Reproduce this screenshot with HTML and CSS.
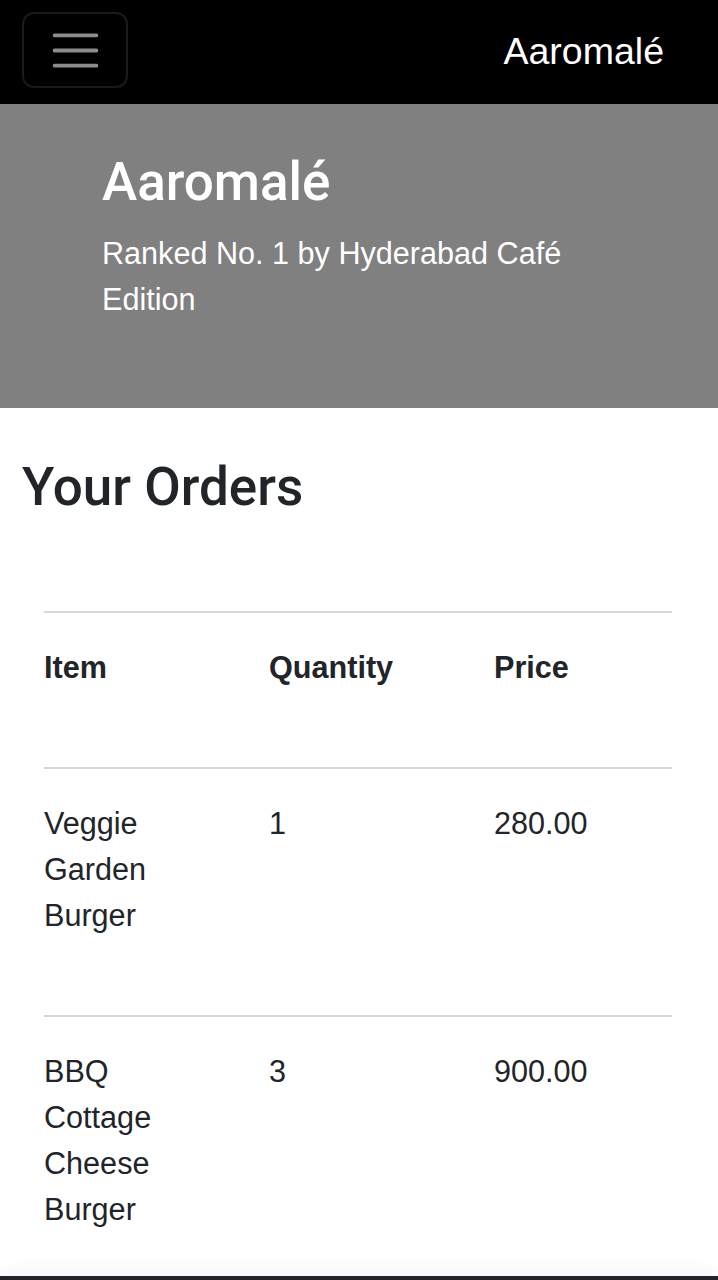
FILE: index.html
```html
<!DOCTYPE html>
<html lang="en">

<head>
    <meta charset="UTF-8">
    <meta name="viewport" content="width=device-width, initial-scale=1.0">
    <title>Aaromalé - Your Orders</title>
    <link rel="stylesheet" href="styles.css">
</head>

<body>
    <nav class="navbar">
        <button class="navbar-toggler" type="button" aria-label="Toggle navigation">
            <svg class="toggler-icon" viewBox="0 0 30 30" xmlns="http://www.w3.org/2000/svg">
                <path d="M4 7h22M4 15h22M4 23h22" stroke="rgba(255,255,255,0.55)" stroke-width="2" stroke-linecap="round" fill="none"/>
            </svg>
        </button>
        <a class="navbar-brand" href="#">Aaromalé</a>
    </nav>

    <section class="hero">
        <h1>Aaromalé</h1>
        <p>Ranked No. 1 by Hyderabad Café Edition</p>
    </section>

    <div class="container">
        <h1 class="page-title">Your Orders</h1>

        <table class="orders-table">
            <colgroup>
                <col class="col-item">
                <col class="col-qty">
                <col class="col-price">
            </colgroup>
            <thead>
                <tr>
                    <th>Item</th>
                    <th>Quantity</th>
                    <th>Price</th>
                </tr>
            </thead>
            <tbody>
                <tr>
                    <td>Veggie Garden Burger</td>
                    <td>1</td>
                    <td>280.00</td>
                </tr>
                <tr>
                    <td>BBQ Cottage Cheese Burger</td>
                    <td>3</td>
                    <td>900.00</td>
                </tr>
            </tbody>
        </table>
    </div>

    <footer class="bottom-bar"></footer>
</body>
</html>
```

FILE: styles.css
```css
:root {
    --text-color: #212529;
    --hero-bg: #808080;
    --border-color: #d6d6d6;
}

* {
    margin: 0;
    padding: 0;
    box-sizing: border-box;
}

body {
    font-family: 'Liberation Sans', Arial, sans-serif;
    font-size: 30.6px;
    line-height: 46px;
    color: var(--text-color);
    background-color: #ffffff;
}

.navbar {
    display: flex;
    justify-content: space-between;
    align-items: flex-start;
    height: 104px;
    padding: 12px 54px 0 22px;
    background-color: #000000;
}

.navbar-toggler {
    display: flex;
    align-items: center;
    justify-content: center;
    width: 106px;
    height: 76px;
    background: none;
    border: 2px solid #1a1a1a;
    border-radius: 12px;
}

.toggler-icon {
    width: 57px;
    height: 57px;
}

.navbar-brand {
    margin-top: 16px;
    font-size: 37.5px;
    line-height: 46px;
    color: #ffffff;
    text-decoration: none;
}

.hero {
    background-color: var(--hero-bg);
    color: #ffffff;
    padding: 47px 102px 86px;
}

.hero h1,
.page-title {
    font-family: Roboto, 'Liberation Sans', sans-serif;
    font-size: 53px;
    font-weight: 500;
    line-height: 1.2;
}

.hero h1 {
    margin-bottom: 15px;
}

.container {
    padding: 0 22px;
}

.page-title {
    margin-top: 48px;
    margin-bottom: 92px;
}

.orders-table {
    width: 628px;
    margin-left: 22px;
    border-collapse: collapse;
    table-layout: fixed;
    border-top: 2px solid var(--border-color);
}

.col-item,
.col-qty {
    width: 225px;
}

.orders-table th,
.orders-table td {
    padding: 31px 70px 77px 0;
    text-align: left;
    vertical-align: top;
}

.orders-table th {
    font-weight: bold;
}

.orders-table tr {
    border-bottom: 2px solid var(--border-color);
}

.bottom-bar {
    position: fixed;
    left: 0;
    right: 0;
    bottom: -56px;
    height: 60px;
    background-color: #212529;
    box-shadow: 0 0 26px rgba(0, 0, 0, 0.06);
}
```
